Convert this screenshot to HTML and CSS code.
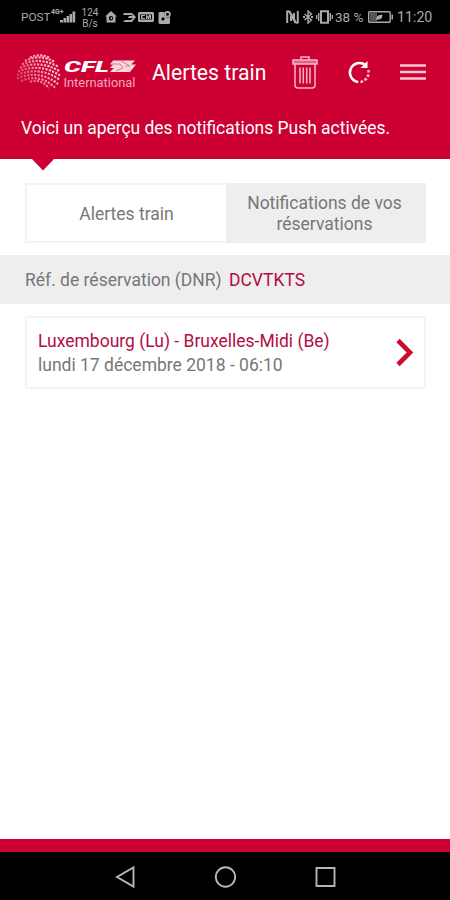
FILE: index.html
```html
<!DOCTYPE html>
<html lang="fr">
<head>
<meta charset="utf-8">
<meta name="viewport" content="width=device-width, initial-scale=1">
<title>Alertes train</title>
<link rel="stylesheet" href="styles.css">
</head>
<body>
<div class="app">
  <div class="status">
    <div class="status-left">
      <span class="carrier">POST</span>
      <svg class="signal" width="25" height="16" viewBox="0 0 25 16"><text x="0" y="6" class="tiny">4G+</text><path d="M9 12h3v2.500H9zM12.500 10h2.500v4.500h-2.500zM15.500 8h2.500v6.500h-2.500zM18.500 6h2.500v8.500h-2.500zM21.500 3.500h2.700v11h-2.700z"/></svg>
      <span class="speed"><span>124</span><span>B/s</span></span>
      <svg class="st-home" width="12" height="12" viewBox="0 0 12 12"><path fill-rule="evenodd" d="M6 0 12 5.500H10.500V11.500H1.500V5.500H0zM6 5a2.200 2.200 0 1 0 0 4.400A2.200 2.200 0 0 0 6 5z"/><circle cx="6.300" cy="7.200" r="1"/></svg>
      <svg class="st-train" width="13" height="11" viewBox="0 0 13 11"><path d="M1 1h8l4 4-4 5H0l2-2h6l2-2H5l1-2h4L8 3H0z"/></svg>
      <svg class="st-card" width="16" height="10" viewBox="0 0 16 10"><path fill-rule="evenodd" d="M1 0h14l1 1v8l-1 1H1L0 9V1zM2 2.500v5h12v-5z"/><path d="M3 3h4v1H4.500v2H7v1H3zM8 3h1l1 2 1-2h2v4h-1V5l-1 2h-1L9 5v2H8z"/></svg>
      <svg class="st-photo" width="13" height="13" viewBox="0 0 13 13"><path fill-rule="evenodd" d="M1.500 1h5v4l3 2 2.500-1v6l-1 1H1.500L.5 12V2zM3 8l2-2 2 2-2 2z"/><path fill-rule="evenodd" d="M9.500 0a3.300 3.300 0 1 0 0 6.600A3.300 3.300 0 0 0 9.500 0zm0 2a1.400 1.400 0 1 1 0 2.800 1.400 1.400 0 0 1 0-2.800z"/></svg>
    </div>
    <div class="status-right">
      <svg class="st-nfc" width="13" height="14" viewBox="0 0 13 14"><path class="line thick" d="M1.200 13V1.500Q4 .8 4.500 4L8 10V3M11.800 1v11.500Q9 13.200 8.500 10L5 4V11"/></svg>
      <svg class="st-bt" width="10" height="14" viewBox="0 0 10 14"><path class="line" d="M1.500 4l7 6L5 13V1l3.500 3-7 6"/><path d="M0 6h2v2H0zM8 6h2v2H8z"/></svg>
      <svg class="st-vib" width="17" height="14" viewBox="0 0 17 14"><path class="line thick" d="M5 1.200h7v11.600H5z"/><path class="line" d="M2.700 3v8M.6 5v4M14.300 3v8M16.400 5v4"/></svg>
      <span class="pct">38 %</span>
      <svg class="st-batt" width="26" height="12" viewBox="0 0 26 12"><rect class="line" x=".7" y=".7" width="21.500" height="10.600" rx="1"/><path d="M23.500 3.500h1.500v5h-1.500z"/><path class="dim" d="M2 2h7v8H2z"/><path d="M8 9q.5-5 4-5l2.500-.5q0 5-4 5z"/></svg>
      <span class="clock">11:20</span>
    </div>
  </div>

  <header class="header">
    <div class="bar">
      <svg class="logo" width="121" height="38" viewBox="0 0 121 38">
        <defs><linearGradient id="globe-shade" gradientUnits="userSpaceOnUse" x1="2" y1="28" x2="30" y2="10"><stop offset="0" stop-color="#da3a60"/><stop offset="1" stop-color="#f8c4d0"/></linearGradient></defs>
        <g class="globe">
          <path d="M14 5.500Q24 1 34 6"/><path d="M9 9Q23 1.500 39 10"/><path d="M6 12.500Q23 4.500 42 14.500"/><path d="M4 16Q23 7.500 43.500 19"/><path d="M2 19.500Q24 10.500 44 23.500"/><path d="M1 23Q24 13.500 44 28"/><path d="M1 26.500Q23 17 42 32"/><path d="M5 29Q23 21 39 35.500"/><path d="M14 30Q24 26 33 36"/>
        </g>
        <text class="cfl" x="48" y="19.500" textLength="45" lengthAdjust="spacingAndGlyphs">CFL</text>
        <path class="mark" d="M97 8.500h22l-4 4h5l-6 7.500H94l4-4h-4l3-3.500h-3z"/>
        <path class="mark-lines" d="M96 12h8l3 4-7 3M105 9l9 5h-5"/>
        <text class="intl" x="47.500" y="35" textLength="72" lengthAdjust="spacingAndGlyphs">International</text>
      </svg>
      <h1 class="title">Alertes train</h1>
      <svg class="trash" width="28" height="36" viewBox="0 0 28 36"><path class="lid" d="M2 6h24v4H2z"/><path d="M10 6V3h8v3M4 10v21q0 3 3 3h14q3 0 3-3V10M9 13.500v16M12.300 13.500v16M15.700 13.500v16M19 13.500v16"/></svg>
      <svg class="refresh" width="24" height="24" viewBox="0 0 24 24"><path d="M11 22A9.600 9.600 0 1 1 18.500 5"/><path class="dots" d="M21.300 10A9.600 9.600 0 0 1 11.500 22"/><path class="head" d="M20.500 1v7h-7z"/></svg>
      <svg class="menu" width="26" height="18" viewBox="0 0 26 18"><path d="M0 2.500h26M0 9h26M0 15.500h26"/></svg>
    </div>
    <p class="intro">Voici un aperçu des notifications Push activées.</p>
    <svg class="pointer" width="24" height="13" viewBox="0 0 24 13"><path d="M0 0h24L12 12.500z"/></svg>
  </header>

  <main class="content">
    <div class="tabs">
      <div class="tab tab-active"><span>Alertes train</span></div>
      <div class="tab tab-other"><span>Notifications de vos<br>réservations</span></div>
    </div>
    <div class="ref"><span class="ref-label">Réf. de réservation (DNR)</span><span class="ref-code">DCVTKTS</span></div>
    <div class="trip">
      <div class="trip-text">
        <div class="route">Luxembourg (Lu) - Bruxelles-Midi (Be)</div>
        <div class="date">lundi 17 décembre 2018 - 06:10</div>
      </div>
      <svg class="chevron" width="18" height="30" viewBox="0 0 18 30"><path d="M2 2.500 14 14.500 2 26.500"/></svg>
    </div>
  </main>
  <div class="footer"></div>
  <nav class="nav">
    <svg width="22" height="24" viewBox="0 0 22 24"><path d="M19.500 2.500v19L3 12z"/></svg>
    <svg width="22" height="24" viewBox="0 0 22 24"><circle cx="11.500" cy="12" r="9.700"/></svg>
    <svg width="22" height="24" viewBox="0 0 22 24"><path d="M2.500 3h18v18h-18z"/></svg>
  </nav>
</div>
</body>
</html>
```
FILE: styles.css
```css
* { box-sizing: border-box; }
body { margin: 0; background: #fff; font-family: Roboto, "Liberation Sans", sans-serif; }
svg { display: block; flex: none; }
.app { width: 450px; height: 900px; display: flex; flex-direction: column; overflow: hidden; }

.status { height: 34px; flex: none; background: #000; color: #aaa; display: flex; justify-content: space-between; padding: 0 18px 0 21px; white-space: nowrap; }
.status svg { fill: #aaa; }
.status .line { fill: none; stroke: #aaa; stroke-width: 1.4; }
.status .thick { stroke-width: 2; }
.status .dim { fill: #555; }
.status-left, .status-right { display: flex; align-items: center; }
.carrier { font-size: 11.8px; width: 30px; }
.signal { margin-bottom: 2px; }
.tiny { font-size: 7px; font-weight: 700; }
.speed { display: flex; flex-direction: column; align-items: center; width: 18px; margin-left: 5px; padding-top: 1px; font-size: 10px; line-height: 11px; }
.st-home { margin-left: 6px; }
.st-train { margin-left: 6px; }
.st-card { margin-left: 2px; }
.st-photo { margin-left: 4px; }
.st-bt { margin-left: 4px; }
.st-vib { margin-left: 3px; }
.pct { font-size: 13.5px; margin-left: 2px; width: 29px; }
.st-batt { margin-left: 4px; }
.clock { font-size: 14.2px; margin-left: 3px; width: 35px; }

.header { position: relative; height: 125px; flex: none; background: #cc0033; color: #fff; }
.bar { display: flex; align-items: center; height: 76px; padding-left: 16px; }
.logo { overflow: visible; margin-top: -3px; }
.globe { fill: none; stroke: url(#globe-shade); stroke-width: 2.2; stroke-dasharray: 2.2 1.3; }
.cfl { fill: #fff; font-size: 15px; font-weight: 900; font-style: italic; }
.mark { fill: #f9d7df; }
.mark-lines { fill: none; stroke: #e2748e; stroke-width: 1; }
.intl { fill: #f3a9ba; font-size: 12.3px; }
.title { margin: 0 0 0 15px; width: 115px; font-size: 21.2px; font-weight: 400; white-space: nowrap; }
.trash { margin-left: 24px; fill: none; stroke: #f6b8c7; stroke-width: 1.5; }
.trash .lid { fill: #dc6681; }
.refresh { margin-left: 28px; fill: none; stroke: #fff; stroke-width: 2.5; }
.refresh .dots { stroke-dasharray: 2.6 1.8; stroke: #f6c5d1; }
.refresh .head { fill: #fff; stroke: none; }
.menu { margin-left: 29px; stroke: #f8c8d3; stroke-width: 2.6; }
.intro { margin: 8px 0 0 21px; font-size: 17.45px; line-height: 21px; white-space: nowrap; }
.pointer { position: absolute; left: 31px; top: 124px; fill: #cc0033; }

.content { flex: 1; padding-top: 24px; color: #777; }
.tabs { display: flex; height: 60px; margin: 0 24px 0 25px; }
.tab { display: flex; align-items: center; justify-content: center; text-align: center; font-size: 17.5px; line-height: 21px; padding-top: 2px; }
.tab-active { flex: 1; border: 2px solid #f3f3f3; border-right: 0; }
.tab-other { width: 200px; background: #eee; padding-right: 3px; }
.ref { display: flex; align-items: center; height: 49px; margin-top: 12px; padding: 1px 0 0 25px; background: #eee; font-size: 17.5px; white-space: nowrap; }
.ref-label { width: 204px; }
.ref-code { color: #b60b43; }
.trip { display: flex; justify-content: space-between; align-items: center; height: 73px; margin: 12px 24px 0 25px; border: 2px solid #f4f4f4; padding: 0 10px 0 11px; white-space: nowrap; }
.trip-text { padding-top: 1px; font-size: 17.5px; line-height: 24px; }
.route { color: #b30d45; }
.chevron { fill: none; stroke: #c8102e; stroke-width: 4.6; }
.footer { height: 13px; flex: none; background: #cc0033; }
.nav { height: 48px; flex: none; background: #000; display: flex; justify-content: center; align-items: center; gap: 78px; }
.nav svg { fill: none; stroke: #b5b5b5; stroke-width: 1.9; margin-top: 2px; }
```
